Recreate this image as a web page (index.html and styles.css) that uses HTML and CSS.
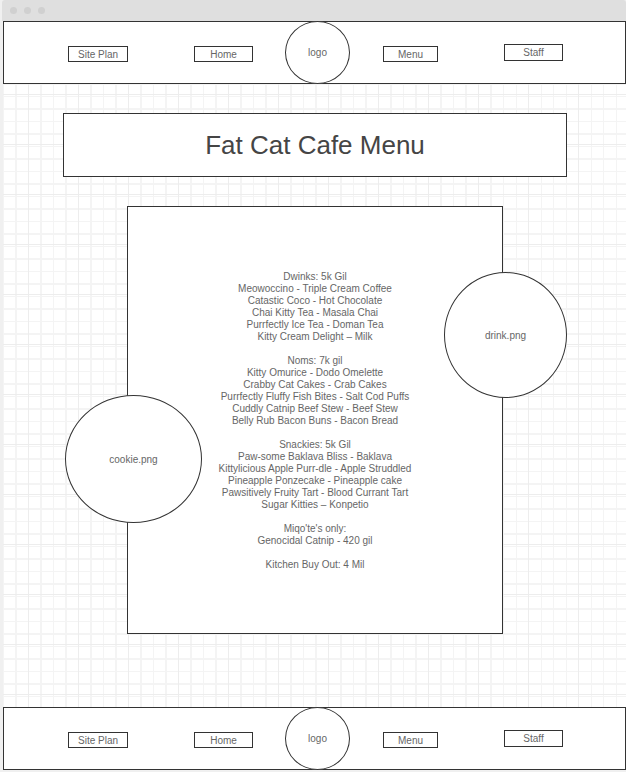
FILE: index.html
```html
<!DOCTYPE html>
<html lang="en">
<head>
    <meta charset="UTF-8">
    <meta name="viewport" content="width=device-width, initial-scale=1.0">
    <link rel="stylesheet" href="styles.css">
    <title>Fat Cat Cafe Menu</title>
</head>
<body>
    <!-- Browser window chrome -->
    <div class="chrome">
        <span class="dot"></span>
        <span class="dot"></span>
        <span class="dot"></span>
    </div>

    <div class="page">
        <!-- Top navigation -->
        <header class="bar">
            <a class="nav-btn site-plan">Site Plan</a>
            <a class="nav-btn home">Home</a>
            <div class="logo">logo</div>
            <a class="nav-btn menu">Menu</a>
            <a class="nav-btn staff">Staff</a>
        </header>

        <main class="main">
            <div class="title-box">
                <h1>Fat Cat Cafe Menu</h1>
            </div>

            <div class="menu-box">
                <div class="menu-text">
                    <p>Dwinks: 5k Gil<br>
                    Meowoccino - Triple Cream Coffee<br>
                    Catastic Coco - Hot Chocolate<br>
                    Chai Kitty Tea - Masala Chai<br>
                    Purrfectly Ice Tea - Doman Tea<br>
                    Kitty Cream Delight &ndash; Milk</p>

                    <p>Noms: 7k gil<br>
                    Kitty Omurice - Dodo Omelette<br>
                    Crabby Cat Cakes - Crab Cakes<br>
                    Purrfectly Fluffy Fish Bites - Salt Cod Puffs<br>
                    Cuddly Catnip Beef Stew - Beef Stew<br>
                    Belly Rub Bacon Buns - Bacon Bread</p>

                    <p>Snackies: 5k Gil<br>
                    Paw-some Baklava Bliss - Baklava<br>
                    Kittylicious Apple Purr-dle - Apple Struddled<br>
                    Pineapple Ponzecake - Pineapple cake<br>
                    Pawsitively Fruity Tart - Blood Currant Tart<br>
                    Sugar Kitties &ndash; Konpetio</p>

                    <p>Miqo'te's only:<br>
                    Genocidal Catnip - 420 gil</p>

                    <p>Kitchen Buy Out: 4 Mil</p>
                </div>

                <!-- Picture placeholders sit over the menu border -->
                <div class="pic pic-drink">drink.png</div>
                <div class="pic pic-cookie">cookie.png</div>
            </div>
        </main>

        <!-- Bottom navigation -->
        <footer class="bar">
            <a class="nav-btn site-plan">Site Plan</a>
            <a class="nav-btn home">Home</a>
            <div class="logo">logo</div>
            <a class="nav-btn menu">Menu</a>
            <a class="nav-btn staff">Staff</a>
        </footer>
    </div>
</body>
</html>
```

FILE: styles.css
```css
* {
    box-sizing: border-box;
}

body {
    margin: 0;
    width: 626px;
    height: 772px;
    overflow: hidden;
    background-color: #f0f0f0;
    font-family: 'Liberation Sans', Arial, Helvetica, sans-serif;
}

.chrome {
    height: 21px;
    margin-left: 2px;
    padding-left: 8px;
    background-color: #dfdfdf;
    border-radius: 3px 3px 0 0;
    display: flex;
    align-items: center;
    gap: 7px;
}

.dot {
    width: 7px;
    height: 7px;
    border-radius: 50%;
    background-color: #d0d0d0;
}

.page {
    margin-left: 3px;
    width: 623px;
    height: 749px;
    display: flex;
    flex-direction: column;
    background-color: #fff;
    background-image:
        repeating-linear-gradient(0deg, transparent 0 25px, #ededed 25px 26px, transparent 26px 50px),
        repeating-linear-gradient(90deg, transparent 0 25px, #ededed 25px 26px, transparent 26px 50px),
        repeating-linear-gradient(180deg, #f4f4f4 0 1px, transparent 1px 12.5px),
        repeating-linear-gradient(90deg, #f4f4f4 0 1px, transparent 1px 12.5px);
}

/* header and footer bars */
.bar {
    height: 63px;
    border: 1px solid #333;
    background-color: #fff;
    display: flex;
    align-items: flex-start;
    padding-left: 64px;
}

.nav-btn {
    height: 16px;
    margin-top: 24px;
    border: 1px solid #333;
    display: flex;
    align-items: center;
    justify-content: center;
    font-size: 10px;
    color: #666;
}

.site-plan {
    width: 60px;
}

.home {
    width: 59px;
    margin-left: 66px;
}

.menu {
    width: 55px;
    margin-left: 33px;
}

.staff {
    width: 59px;
    height: 17px;
    margin-top: 22px;
    margin-left: 66px;
}

.logo {
    width: 65px;
    height: 63px;
    margin-top: -1px;
    margin-left: 32px;
    border: 1px solid #333;
    border-radius: 50%;
    background-color: #fff;
    display: flex;
    align-items: center;
    justify-content: center;
    font-size: 10px;
    color: #666;
}

.main {
    flex: 1;
    padding-top: 29px;
}

.title-box {
    width: 504px;
    height: 64px;
    margin-left: 60px;
    border: 1px solid #333;
    background-color: #fff;
    display: flex;
    align-items: center;
    justify-content: center;
}

h1 {
    margin: 0;
    font-size: 26px;
    font-weight: normal;
    color: #454545;
}

.menu-box {
    position: relative;
    width: 376px;
    height: 428px;
    margin: 29px 0 0 124px;
    border: 1px solid #333;
    background-color: #fff;
    display: flex;
    align-items: center;
    justify-content: center;
    padding-top: 2px;
}

.menu-text {
    text-align: center;
    font-size: 10px;
    line-height: 12px;
    color: #666;
}

.menu-text p {
    margin: 0 0 12px;
}

.menu-text p:last-child {
    margin-bottom: 0;
}

.pic {
    position: absolute;
    border: 1px solid #333;
    border-radius: 50%;
    background-color: #fff;
    display: flex;
    align-items: center;
    justify-content: center;
    font-size: 10px;
    color: #666;
}

.pic-drink {
    left: 316px;
    top: 65px;
    width: 123px;
    height: 126px;
}

.pic-cookie {
    left: -63px;
    top: 188px;
    width: 137px;
    height: 128px;
}
```
